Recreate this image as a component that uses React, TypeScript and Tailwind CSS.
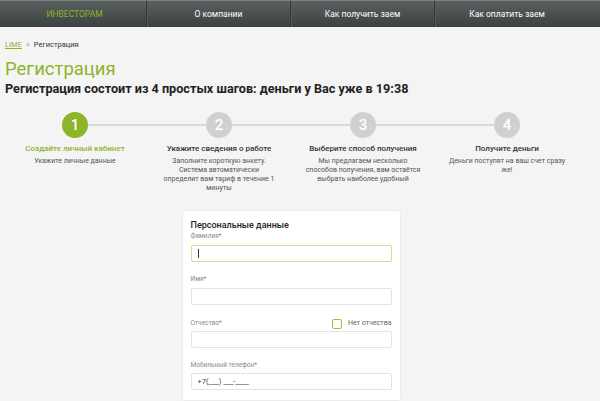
import React from "react";

const navItems = ["ИНВЕСТОРАМ", "О компании", "Как получить заем", "Как оплатить заем"];

const steps = [
  { n: 1, title: "Создайте личный кабинет", lines: ["Укажите личные данные"] },
  {
    n: 2,
    title: "Укажите сведения о работе",
    lines: ["Заполните короткую анкету.", "Система автоматически", "определит вам тариф в течение 1", "минуты"],
  },
  {
    n: 3,
    title: "Выберите способ получения",
    lines: ["Мы предлагаем несколько", "способов получения, вам остаётся", "выбрать наиболее удобный"],
  },
  { n: 4, title: "Получите деньги", lines: ["Деньги поступят на ваш счет сразу", "же!"] },
];

const Field = ({ label, children }: { label: React.ReactNode; children: React.ReactNode }) => (
  <div className="flex flex-col">
    {label}
    {children}
  </div>
);

export default function App() {
  return (
    <div className="w-[600px] h-[401px] overflow-hidden bg-[#f4f4f4] font-['Roboto',sans-serif]">
      <nav className="h-[27px] flex pl-[3px] bg-gradient-to-b from-[#5a6160] to-[#3b4140] border-t border-[#7a807f]">
        {navItems.map((item, i) => (
          <div
            key={item}
            className={`w-[144px] flex items-center justify-center text-[8.5px] ${
              i === 0 ? "text-[#8db52c]" : "text-white"
            } ${i < 3 ? "border-r border-[#343938] shadow-[1px_0_0_#565c5b]" : ""}`}
          >
            {item}
          </div>
        ))}
      </nav>

      <div className="px-[5px] pt-[12px] text-[7.5px] text-[#333] flex items-center gap-[4px]">
        <span className="text-[#8db52c] underline">LIME</span>
        <span className="text-[#999]">&gt;</span>
        <span>Регистрация</span>
      </div>

      <h1 className="px-[5px] mt-[8px] text-[18.5px] leading-[23px] text-[#8db52c]">Регистрация</h1>
      <h2 className="px-[5px] mt-[1px] text-[12.65px] leading-[14px] font-bold text-[#222]">
        Регистрация состоит из 4 простых шагов: деньги у Вас уже в 19:38
      </h2>

      <div className="pl-[3px] mt-[16px] flex">
        {steps.map((s, i) => (
          <div key={s.n} className="w-[144px] flex flex-col items-center">
            <div className="w-full flex items-center">
              <div className={`flex-1 h-[2px] ${i === 0 ? "" : "bg-[#d9d9d9]"}`} />
              <div
                className={`w-[26px] h-[26px] rounded-full flex items-center justify-center text-white text-[15px] font-medium ${
                  i === 0 ? "bg-[#8db52c]" : "bg-[#d0d0d0]"
                }`}
              >
                {s.n}
              </div>
              <div className={`flex-1 h-[2px] ${i === 3 ? "" : "bg-[#d9d9d9]"}`} />
            </div>
            <div
              className={`mt-[5px] text-[8px] leading-[12px] font-medium ${
                i === 0 ? "text-[#8db52c]" : "text-[#333]"
              }`}
            >
              {s.title}
            </div>
            <p className="mt-[2px] text-center text-[7px] leading-[9px] text-[#555]">
              {s.lines.map((l, j) => (
                <React.Fragment key={j}>
                  {j > 0 && <br />}
                  {l}
                </React.Fragment>
              ))}
            </p>
          </div>
        ))}
      </div>

      <div className="pl-[3px] mt-[17px] w-[579px] flex justify-center">
        <div className="w-[219px] bg-white rounded-[3px] border border-[#ececec] px-[8px] pt-[8px] pb-[10px]">
          <div className="text-[9px] leading-[12px] font-medium text-[#222]">Персональные данные</div>
          <div className="mt-[1px] flex flex-col gap-[13px]">
            <Field label={<div className="text-[6.5px] leading-[9px] text-[#8a8a8a]">Фамилия*</div>}>
              <div className="mt-[4px] h-[17px] rounded-[2px] border border-[#cfdf94] bg-white flex items-center px-[6px]">
                <div className="w-px h-[9px] bg-[#333]" />
              </div>
            </Field>
            <Field label={<div className="text-[6.5px] leading-[9px] text-[#8a8a8a]">Имя*</div>}>
              <div className="mt-[4px] h-[17px] rounded-[2px] border border-[#e3e3e3] bg-white" />
            </Field>
            <Field
              label={
                <div className="flex items-center justify-between">
                  <span className="text-[6.5px] leading-[9px] text-[#8a8a8a]">Отчество*</span>
                  <label className="flex items-center gap-[6px] text-[7px] text-[#666]">
                    <span className="w-[10px] h-[10px] rounded-[2px] border border-[#9dbf3a] bg-white" />
                    Нет отчества
                  </label>
                </div>
              }
            >
              <div className="mt-[2px] h-[17px] rounded-[2px] border border-[#e3e3e3] bg-white" />
            </Field>
            <Field label={<div className="text-[6.5px] leading-[9px] text-[#8a8a8a]">Мобильный телефон*</div>}>
              <div className="mt-[3px] h-[17px] rounded-[2px] border border-[#e3e3e3] bg-white flex items-center px-[6px] text-[7.5px] text-[#444]">
                +7(___) ___-____
              </div>
            </Field>
          </div>
        </div>
      </div>
    </div>
  );
}
